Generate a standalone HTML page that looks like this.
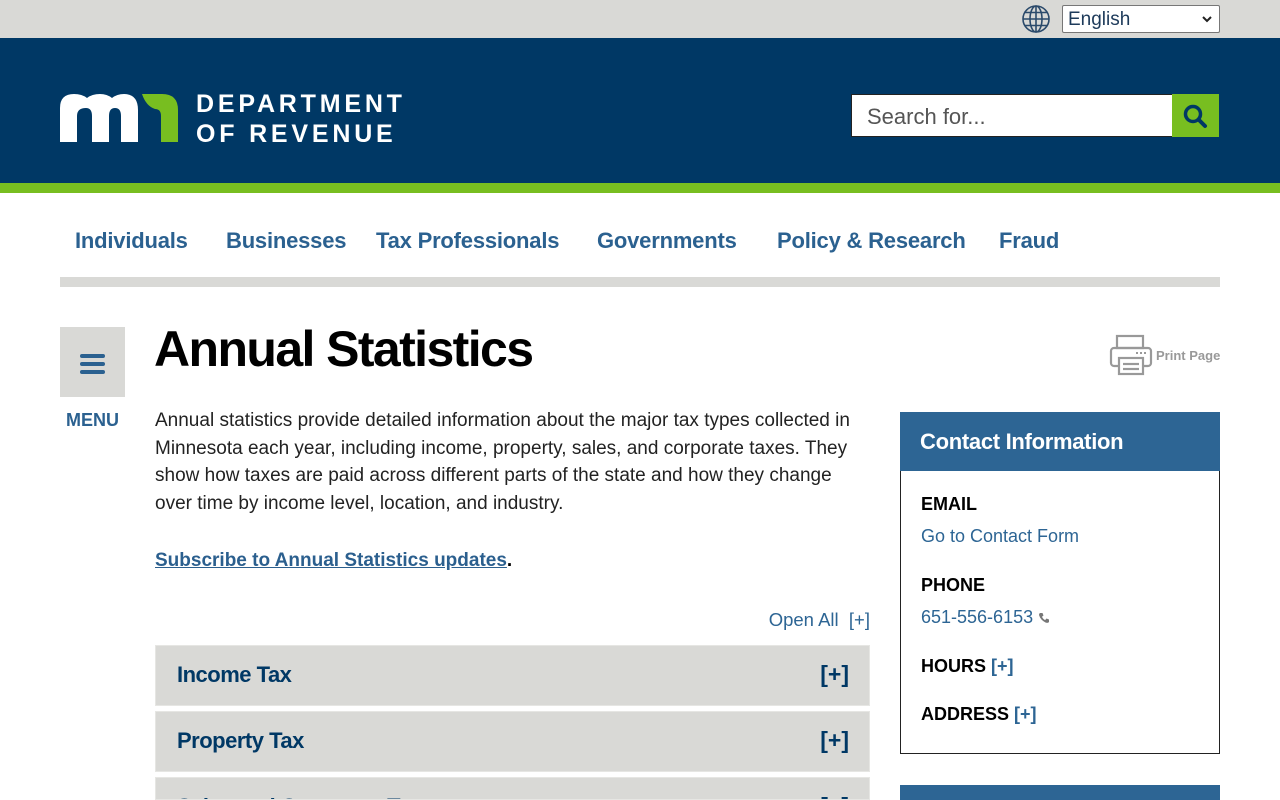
<!DOCTYPE html>
<html><head><meta charset="utf-8"><style>
*{margin:0;padding:0;box-sizing:border-box}
html,body{width:1280px;height:800px;overflow:hidden}
body{background:#fff;font-family:"Liberation Sans",sans-serif;position:relative}
.abs{position:absolute}
.top{left:0;top:0;width:1280px;height:38px;background:#d9d9d6}
.hdr{left:0;top:38px;width:1280px;height:145px;background:#003865}
.grn{left:0;top:183px;width:1280px;height:10px;background:#78be20}
.nav a{position:absolute;top:228px;font-size:22px;font-weight:bold;color:#2b6190;text-decoration:none;white-space:nowrap;letter-spacing:-0.2px}
.p{font-size:19px;line-height:27.6px;color:#222}
.acc{left:155px;width:715px;height:61px;background:#d9d9d6;border:1px solid #e6e6e3}
.acc span{position:absolute;left:21px;top:16px;font-size:22px;font-weight:bold;color:#003865;letter-spacing:-0.5px}
.acc b{position:absolute;right:20px;top:15px;font-size:23px;color:#003865}
.lbl{font-size:18px;font-weight:bold;color:#000}
.lnk{font-size:18px;color:#2d6594}
</style></head><body>
<div class="abs top"></div>
<svg class="abs" style="left:1021px;top:5px" width="30" height="28" viewBox="0 0 30 28"><g fill="none" stroke="#2b4a6b" stroke-width="1.6"><circle cx="15" cy="14" r="13"/><ellipse cx="15" cy="14" rx="6" ry="13"/><line x1="15" y1="1" x2="15" y2="27"/><line x1="2" y1="14" x2="28" y2="14"/><line x1="4" y1="7.5" x2="26" y2="7.5"/><line x1="4" y1="20.5" x2="26" y2="20.5"/></g></svg>
<div class="abs" style="left:1062px;top:5px;width:158px;height:28px;background:#fff;border:1px solid #777;border-radius:2px;font-size:19px;color:#1d3a5a;padding:3px 0 0 5px">English<svg style="position:absolute;right:7px;top:10px" width="10" height="7" viewBox="0 0 10 7"><path d="M1 1 L5 5 L9 1" fill="none" stroke="#222" stroke-width="2"/></svg></div>
<div class="abs hdr"></div>
<div class="abs grn"></div>
<svg class="abs" style="left:60px;top:92px" width="120" height="51" viewBox="0 0 120 51"><path d="M0 50 V16 Q0 2 14 2 Q22 2 27 6 Q32 2 40 2 Q47 2 52 6 Q57 2 64 2 Q78 2 78 18 V50 H61 V24 Q61 16 55 16 Q49 16 49 24 V50 H32 V24 Q32 16 26 16 Q17 16 17 24 V50 Z" fill="#fff"/><path d="M82 2 H102 Q118 2 118 18 V50 H101 V24 Q101 17 95 17 Q86 14 82 2 Z" fill="#78be20"/></svg>
<div class="abs" style="left:196px;top:89px;color:#fff;font-weight:bold;font-size:25px;letter-spacing:3.8px;line-height:30px">DEPARTMENT<br>OF REVENUE</div>
<div class="abs" style="left:851px;top:94px;width:322px;height:43px;background:#fff;border:1px solid #222;font-size:22px;color:#555;padding:9px 0 0 15px">Search for...</div>
<div class="abs" style="left:1172px;top:94px;width:47px;height:43px;background:#78be20"></div>
<svg class="abs" style="left:1182px;top:103px" width="27" height="27" viewBox="0 0 27 27"><circle cx="11" cy="11" r="7.5" fill="none" stroke="#003865" stroke-width="3.5"/><line x1="16.5" y1="16.5" x2="23" y2="23" stroke="#003865" stroke-width="4" stroke-linecap="round"/></svg>
<div class="nav">
<a style="left:75px">Individuals</a><a style="left:226px">Businesses</a><a style="left:376px">Tax Professionals</a><a style="left:597px">Governments</a><a style="left:777px">Policy &amp; Research</a><a style="left:999px">Fraud</a>
</div>
<div class="abs" style="left:60px;top:277px;width:1160px;height:10px;background:#d9d9d6"></div>
<div class="abs" style="left:60px;top:327px;width:65px;height:70px;background:#d9d9d6"></div>
<div class="abs" style="left:80px;top:354px;width:25px;height:4px;background:#2b6190;border-radius:2px;box-shadow:0 8px 0 #2b6190,0 16px 0 #2b6190"></div>
<div class="abs" style="left:66px;top:410px;font-size:18px;font-weight:bold;color:#2b6190">MENU</div>
<div class="abs" style="left:154px;top:320px;font-size:50px;font-weight:bold;color:#000;letter-spacing:-1.6px">Annual Statistics</div>
<svg class="abs" style="left:1109px;top:334px" width="44" height="42" viewBox="0 0 44 42"><g fill="none" stroke="#999" stroke-width="2.2"><rect x="8" y="2" width="26" height="12"/><rect x="2" y="14" width="40" height="18" rx="3"/><rect x="10" y="24" width="24" height="16" fill="#fff"/><line x1="14" y1="30" x2="30" y2="30"/><line x1="14" y1="35" x2="30" y2="35"/></g><g fill="#999"><rect x="27" y="18" width="2" height="2"/><rect x="31" y="18" width="2" height="2"/><rect x="35" y="18" width="2" height="2"/></g></svg>
<div class="abs" style="left:1156px;top:348px;font-size:13px;font-weight:bold;color:#999">Print Page</div>
<div class="abs p" style="left:155px;top:407px;width:740px">Annual statistics provide detailed information about the major tax types collected in<br>Minnesota each year, including income, property, sales, and corporate taxes. They<br>show how taxes are paid across different parts of the state and how they change<br>over time by income level, location, and industry.</div>
<div class="abs" style="left:155px;top:550px;font-size:19px;font-weight:bold;color:#2b5f8e"><span style="text-decoration:underline">Subscribe to Annual Statistics updates</span><span style="color:#000">.</span></div>
<div class="abs" style="left:700px;top:609px;width:170px;text-align:right;font-size:18.5px;color:#2d6594">Open All&nbsp; [+]</div>
<div class="abs acc" style="top:645px"><span>Income Tax</span><b>[+]</b></div>
<div class="abs acc" style="top:711px"><span>Property Tax</span><b>[+]</b></div>
<div class="abs acc" style="top:777px;height:23px;overflow:hidden"><span>Sales and Corporate Tax</span><b>[+]</b></div>
<div class="abs" style="left:900px;top:412px;width:320px;height:342px;border:1px solid #222"></div>
<div class="abs" style="left:900px;top:412px;width:320px;height:59px;background:#2d6594;color:#fff;font-size:22px;font-weight:bold;padding:17px 0 0 20px;letter-spacing:-0.3px">Contact Information</div>
<div class="abs lbl" style="left:921px;top:494px">EMAIL</div>
<div class="abs lnk" style="left:921px;top:526px">Go to Contact Form</div>
<div class="abs lbl" style="left:921px;top:575px">PHONE</div>
<div class="abs lnk" style="left:921px;top:607px">651-556-6153</div>
<svg class="abs" style="left:1038px;top:612px" width="12" height="12" viewBox="0 0 12 12"><path d="M2 1 L4.5 1 L5.5 3.5 L4 4.8 Q5.2 7.5 7.2 8 L8.5 6.5 L11 7.5 L11 10 Q10 11.5 7.5 10.5 Q2.5 8 1 3 Q1 1.5 2 1 Z" fill="#777"/></svg>
<div class="abs lbl" style="left:921px;top:656px">HOURS <span style="color:#2d6594">[+]</span></div>
<div class="abs lbl" style="left:921px;top:704px">ADDRESS <span style="color:#2d6594">[+]</span></div>
<div class="abs" style="left:900px;top:785px;width:320px;height:15px;background:#2d6594"></div>
</body></html>
